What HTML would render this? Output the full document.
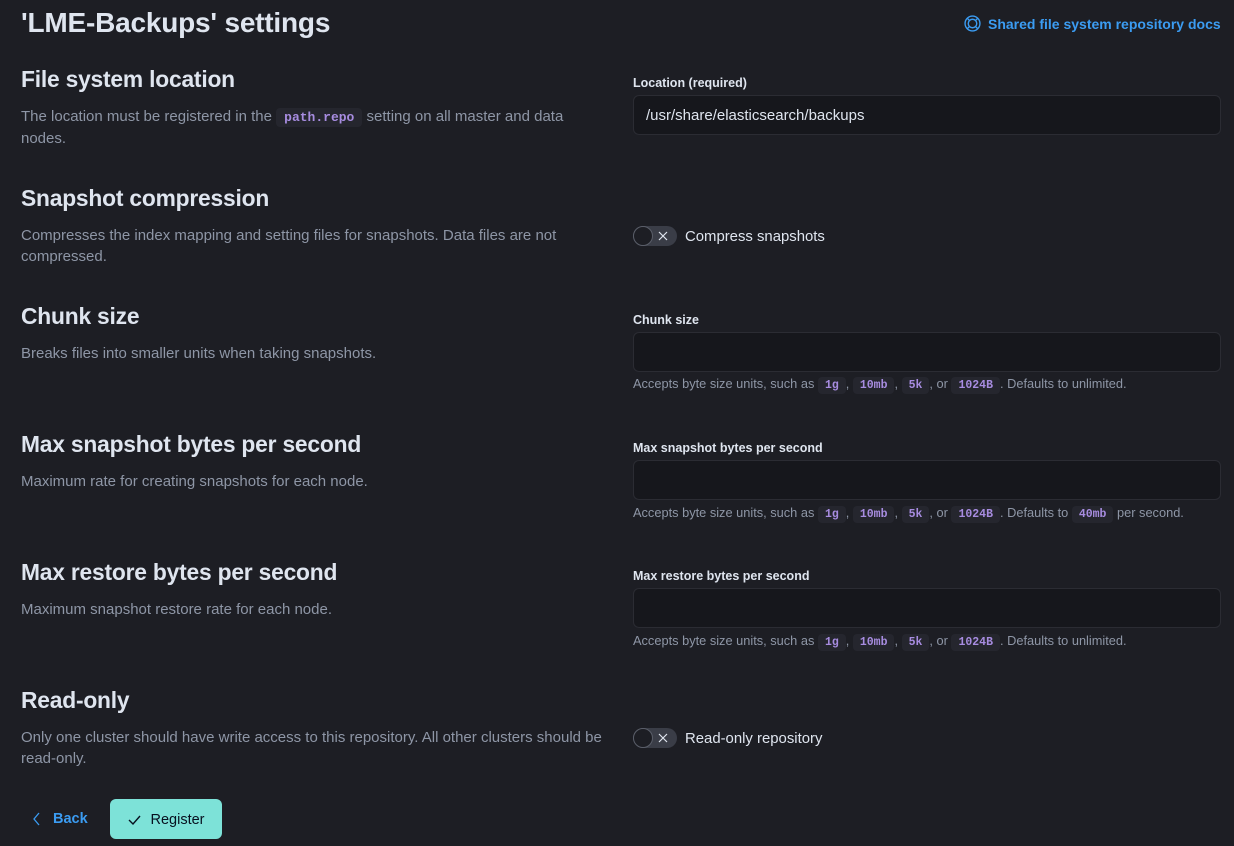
<!DOCTYPE html>
<html><head><style>
*{box-sizing:border-box;margin:0;padding:0}
body{width:1234px;height:846px;background:#1d1e24;font-family:"Liberation Sans",sans-serif;color:#dfe5ef;position:relative;overflow:hidden}
.a{position:absolute}
h1{font-size:28px;font-weight:700;letter-spacing:-0.2px}
h2{font-size:22.8px;font-weight:700;letter-spacing:-0.2px}
.d{font-size:15px;color:#8e96a6;line-height:21px;width:595px}
code{font-family:"Liberation Mono",monospace;font-weight:700;background:#25262e;color:#a78ce0;border-radius:4px;padding:2px 8px;font-size:13px}
.lab{font-size:12.5px;font-weight:700;color:#dfe5ef}
.in{width:588px;height:40px;background:#16171c;border:1px solid #2b2c33;border-radius:6px;font-size:15px;color:#dfe5ef;padding:11px 12px}
.h{font-size:12.8px;color:#8e96a6;white-space:nowrap}
.h code{font-size:11.5px;padding:2px 7px}
.sl{font-size:14.9px;color:#dfe5ef;white-space:nowrap}
</style></head><body>
<h1 class="a" style="left:21px;top:7px">'LME-Backups' settings</h1>
<div class="a" style="left:964px;top:15px;font-size:14px;color:#3b9cf2;font-weight:700;display:flex;align-items:center;gap:7px">
<svg width="17" height="17" viewBox="0 0 16 16" fill="none" stroke="#3b9cf2" stroke-width="1.3"><circle cx="8" cy="8" r="7"/><circle cx="8" cy="8" r="4"/><path d="M3 3l2.2 2.2M13 3l-2.2 2.2M3 13l2.2-2.2M13 13l-2.2-2.2"/></svg>Shared file system repository docs</div>

<h2 class="a" style="left:21px;top:66px">File system location</h2>
<div class="a d" style="left:21px;top:106px;width:560px">The location must be registered in the <code>path.repo</code> setting on all master and data nodes.</div>
<div class="a lab" style="left:633px;top:76px">Location (required)</div>
<div class="a in" style="left:633px;top:95px">/usr/share/elasticsearch/backups</div>

<h2 class="a" style="left:21px;top:185px">Snapshot compression</h2>
<div class="a d" style="left:21px;top:225px">Compresses the index mapping and setting files for snapshots. Data files are not compressed.</div>
<svg class="a" style="left:633px;top:226px" width="44" height="20" viewBox="0 0 44 20"><rect x="0" y="0" width="44" height="20" rx="10" fill="#3a3d47"/><circle cx="10" cy="10" r="9.5" fill="#1d1e24" stroke="#5a5e69"/><path d="M26 6l8 8M34 6l-8 8" stroke="#dfe5ef" stroke-width="1.2"/></svg>
<div class="a sl" style="left:685px;top:229px">Compress snapshots</div>

<h2 class="a" style="left:21px;top:303px">Chunk size</h2>
<div class="a d" style="left:21px;top:343px">Breaks files into smaller units when taking snapshots.</div>
<div class="a lab" style="left:633px;top:313px">Chunk size</div>
<div class="a in" style="left:633px;top:332px"></div>
<div class="a h" style="left:633px;top:376px">Accepts byte size units, such as <code>1g</code>, <code>10mb</code>, <code>5k</code>, or <code>1024B</code>. Defaults to unlimited.</div>

<h2 class="a" style="left:21px;top:431px">Max snapshot bytes per second</h2>
<div class="a d" style="left:21px;top:471px">Maximum rate for creating snapshots for each node.</div>
<div class="a lab" style="left:633px;top:441px">Max snapshot bytes per second</div>
<div class="a in" style="left:633px;top:460px"></div>
<div class="a h" style="left:633px;top:505px">Accepts byte size units, such as <code>1g</code>, <code>10mb</code>, <code>5k</code>, or <code>1024B</code>. Defaults to <code>40mb</code> per second.</div>

<h2 class="a" style="left:21px;top:559px">Max restore bytes per second</h2>
<div class="a d" style="left:21px;top:599px">Maximum snapshot restore rate for each node.</div>
<div class="a lab" style="left:633px;top:569px">Max restore bytes per second</div>
<div class="a in" style="left:633px;top:588px"></div>
<div class="a h" style="left:633px;top:633px">Accepts byte size units, such as <code>1g</code>, <code>10mb</code>, <code>5k</code>, or <code>1024B</code>. Defaults to unlimited.</div>

<h2 class="a" style="left:21px;top:687px">Read-only</h2>
<div class="a d" style="left:21px;top:727px">Only one cluster should have write access to this repository. All other clusters should be read-only.</div>
<svg class="a" style="left:633px;top:728px" width="44" height="20" viewBox="0 0 44 20"><rect x="0" y="0" width="44" height="20" rx="10" fill="#3a3d47"/><circle cx="10" cy="10" r="9.5" fill="#1d1e24" stroke="#5a5e69"/><path d="M26 6l8 8M34 6l-8 8" stroke="#dfe5ef" stroke-width="1.2"/></svg>
<div class="a sl" style="left:685px;top:731px">Read-only repository</div>

<div class="a" style="left:32px;top:811px;font-size:14.5px;color:#3b9cf2;font-weight:700;display:flex;align-items:center;gap:12px">
<svg width="9" height="14" viewBox="0 0 9 14" fill="none" stroke="#3b9cf2" stroke-width="1.3"><path d="M7 1L2 7l5 6"/></svg>Back</div>
<div class="a" style="left:110px;top:799px;width:112px;height:40px;background:#7de2d8;border-radius:6px;display:flex;align-items:center;justify-content:center;gap:10px;font-size:14.5px;color:#07101f;padding-top:2px">
<svg width="13" height="10" viewBox="0 0 13 10" fill="none" stroke="#07101f" stroke-width="1.4"><path d="M1 5l4 4 7-8"/></svg>Register</div>
</body></html>
